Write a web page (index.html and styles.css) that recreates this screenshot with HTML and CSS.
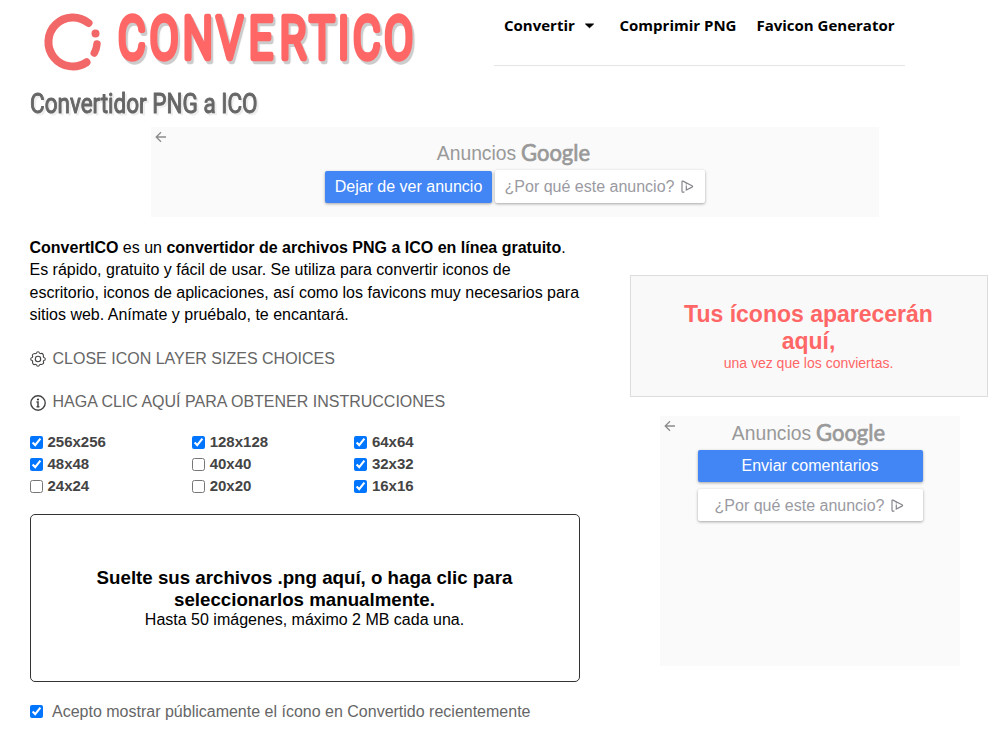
FILE: index.html
```html
<!DOCTYPE html>
<html lang="es">
<head>
<meta charset="utf-8">
<title>Convertidor PNG a ICO</title>
<link rel="stylesheet" href="styles.css">
</head>
<body>
<header class="header">
  <div class="brand">
    <svg class="brand-mark" width="58" height="58" viewBox="0 0 58 58">
      <path d="M44.500 10 A24.500 24.500 0 1 0 42.500 49.300" fill="none" stroke="#f26768" stroke-width="8" stroke-linecap="round"/>
      <circle cx="51.500" cy="20.400" r="4" fill="#f26768"/>
      <path d="M53 31 Q52.500 36 50.300 40" fill="none" stroke="#f26768" stroke-width="7.500" stroke-linecap="round"/>
    </svg>
    <svg class="brand-name" width="320" height="80" viewBox="0 0 320 80">
      <text transform="scale(.72 1)" x="1.7 45.7 91.7 138.4 183.2 226.5 267.3 307 328 371.5" y="58">CONVERTICO</text>
    </svg>
  </div>
  <nav class="nav">
    <a class="nav-drop">Convertir<svg class="caret" width="11" height="6" viewBox="0 0 11 6"><path d="M1.500 1h8L5.500 4.700z"/></svg></a>
    <a>Comprimir PNG</a>
    <a>Favicon Generator</a>
  </nav>
</header>

<h1 class="title">
  <svg width="260" height="41" viewBox="0 0 260 41">
    <text x="1" y="27" textLength="227.500" lengthAdjust="spacingAndGlyphs">Convertidor PNG a ICO</text>
  </svg>
</h1>

<section class="ad ad-wide">
  <svg class="back" width="12" height="12" viewBox="0 0 12 12"><path d="M11 6H1.500M6 1.200L1.200 6L6 10.800"/></svg>
  <div class="ad-head"><span>Anuncios</span><svg class="google" width="70" height="32" viewBox="0 0 70 32"><text x="-1" y="20" textLength="69" lengthAdjust="spacingAndGlyphs">Google</text></svg></div>
  <div class="ad-actions">
    <span class="btn primary">Dejar de ver anuncio</span>
    <span class="btn plain">¿Por qué este anuncio?<svg class="choices" width="13" height="13" viewBox="0 0 13 13"><path d="M3.500 11.700L1.900 12.300Q1 12.200 1 11.300V1.700Q1 .7 2 1.100L11 5.700Q12.200 6.400 11 7.100L5.300 10V5.600"/><path d="M4.700 3.800h1.200"/></svg></span>
  </div>
</section>

<main class="columns">
  <div class="left">
    <p class="intro"><b>ConvertICO</b> es un <b>convertidor de archivos PNG a ICO en línea gratuito</b>. Es rápido, gratuito y fácil de usar. Se utiliza para convertir iconos de escritorio, iconos de aplicaciones, así como los favicons muy necesarios para sitios web. Anímate y pruébalo, te encantará.</p>
    <div class="toggle">
      <svg width="16" height="16" viewBox="0 0 16 16"><path d="M6.500 2.200Q6.700 .7 8 .7T9.500 2.200L10.700 2.700Q12 1.800 12.900 3.100T13.300 5.300L13.800 6.500Q15.300 6.700 15.300 8T13.800 9.500L13.300 10.700Q14.200 12 12.900 12.900T10.700 13.300L9.500 13.800Q9.300 15.300 8 15.300T6.500 13.800L5.300 13.300Q4 14.200 3.100 12.900T2.700 10.700L2.200 9.500Q.7 9.300 .7 8T2.200 6.500L2.700 5.300Q1.800 4 3.100 3.100T5.300 2.700z"/><circle cx="8" cy="8" r="2.700"/></svg>
      <span>CLOSE ICON LAYER SIZES CHOICES</span>
    </div>
    <div class="toggle info">
      <svg width="16" height="16" viewBox="0 0 16 16"><circle cx="8" cy="8" r="7.200" class="ring"/><path class="stem" d="M6.500 6.900H8V11.600M6.600 11.700h2.800"/><circle class="dot" cx="8" cy="4.500" r="1.100"/></svg>
      <span>HAGA CLIC AQUÍ PARA OBTENER INSTRUCCIONES</span>
    </div>
    <div class="sizes">
      <label><input type="checkbox" checked>256x256</label>
      <label><input type="checkbox" checked>128x128</label>
      <label><input type="checkbox" checked>64x64</label>
      <label><input type="checkbox" checked>48x48</label>
      <label><input type="checkbox">40x40</label>
      <label><input type="checkbox" checked>32x32</label>
      <label><input type="checkbox">24x24</label>
      <label><input type="checkbox">20x20</label>
      <label><input type="checkbox" checked>16x16</label>
    </div>
    <div class="drop">
      <strong>Suelte sus archivos .png aquí, o haga clic para seleccionarlos manualmente.</strong>
      <span>Hasta 50 imágenes, máximo 2 MB cada una.</span>
    </div>
    <label class="accept"><input type="checkbox" checked><span>Acepto mostrar públicamente el ícono en Convertido recientemente</span></label>
  </div>
  <aside class="right">
    <div class="result">
      <strong>Tus íconos aparecerán aquí,</strong>
      <span>una vez que los conviertas.</span>
    </div>
    <section class="ad ad-box">
      <svg class="back" width="12" height="12" viewBox="0 0 12 12"><path d="M11 6H1.500M6 1.200L1.200 6L6 10.800"/></svg>
      <div class="ad-head"><span>Anuncios</span><svg class="google" width="70" height="32" viewBox="0 0 70 32"><text x="-1" y="20" textLength="69" lengthAdjust="spacingAndGlyphs">Google</text></svg></div>
      <div class="ad-actions">
        <span class="btn primary">Enviar comentarios</span>
        <span class="btn plain">¿Por qué este anuncio?<svg class="choices" width="13" height="13" viewBox="0 0 13 13"><path d="M3.500 11.700L1.900 12.300Q1 12.200 1 11.300V1.700Q1 .7 2 1.100L11 5.700Q12.200 6.400 11 7.100L5.300 10V5.600"/><path d="M4.700 3.800h1.200"/></svg></span>
      </div>
    </section>
  </aside>
</main>
</body>
</html>
```
FILE: styles.css
```css
* { box-sizing: border-box; }
html, body { height: 732px; overflow: hidden; }
body { margin: 0; background: #fff; color: #000; font: 16px/22.4px "Liberation Sans", Arial, sans-serif; }
svg { display: block; flex: none; overflow: visible; }

.header { display: flex; height: 86px; }
.brand { display: flex; flex: none; width: 494px; padding-left: 43.500px; }
.brand-mark { margin-top: 13px; }
.brand-name { margin-left: 15px; }
.brand-name text { font: 300 58px Roboto, sans-serif; fill: #ff6666; stroke: #ff6666; stroke-width: 5.500px; stroke-linejoin: round; vector-effect: non-scaling-stroke; filter: drop-shadow(3px 3px 0 #ccc); }
.nav { display: flex; gap: 20px; width: 411px; height: 66px; padding: 15px 0 0 10px; border-bottom: 1px solid #e5e5e5; font: 700 15px/21px "Open Sans", sans-serif; white-space: nowrap; }
.nav-drop { display: flex; width: 95.500px; }
.caret { margin: 8px 0 0 9px; fill: #000; stroke: #000; stroke-width: 1; stroke-linejoin: round; }

.title { margin: 0 0 0 29px; height: 41px; }
.title text { font: 400 27px Roboto, sans-serif; fill: #666; stroke: #666; stroke-width: 1px; stroke-linejoin: round; filter: drop-shadow(2px 2px 0 #eee); }

.ad { display: flex; flex-direction: column; align-items: center; background: #fafafa; color: #999; }
.back { align-self: flex-start; margin: 3.500px 0 0 3.500px; fill: none; stroke: #8c8c8c; stroke-width: 1.300; }
.ad-head { display: flex; gap: 6px; height: 26px; margin-left: -1px; font-size: 19.300px; line-height: 22px; }
.google { margin-top: -2px; }
.google text { font: 400 23.500px Lato, sans-serif; fill: #999; stroke: #999; stroke-width: .7px; }
.btn { display: flex; align-items: center; justify-content: center; height: 32px; border-radius: 2px; box-shadow: 0 1px 3px rgba(0,0,0,.35); font-size: 16px; white-space: nowrap; }
.primary { background: #4285f4; color: #fff; }
.plain { background: #fff; color: #9a9aa2; padding: 1px 1px 0 0; }
.choices { margin: -2px 0 0 7px; fill: none; stroke: #85858d; stroke-width: 1.200; }
.ad-wide { width: 728px; height: 90px; margin-left: 151px; }
.ad-wide .ad-actions { display: flex; gap: 3px; align-items: flex-end; margin-top: 1.500px; }
.ad-wide .primary { width: 167px; }
.ad-wide .plain { width: 210px; height: 33px; }

.columns { display: flex; }
.left { width: 550px; margin-left: 30px; padding-top: 20px; }
.intro { margin: 0 -4px 0 -0.500px; }
.toggle { display: flex; gap: 6.500px; margin-top: 21px; color: #666; }
.toggle svg { margin-top: 3px; fill: none; stroke: #444; stroke-width: 1.100; }
.toggle .ring { stroke-width: 1.400; }
.toggle .stem { stroke-width: 1.500; }
.toggle .dot { fill: #333; stroke: none; }
.info svg { margin-top: 4px; }
input { width: 13px; height: 13px; margin: 0; flex: none; }
.sizes { display: grid; grid-template-columns: 162.200px 162.200px 162px; grid-auto-rows: 22px; margin-top: 18px; color: #444; font-size: 15px; font-weight: 700; }
.sizes label { display: flex; align-items: center; gap: 4.500px; line-height: 22px; }
.drop { display: flex; flex-direction: column; justify-content: center; height: 168px; margin-top: 17px; padding: 0 61px 0 60px; border: 1px solid #333; border-radius: 5px; text-align: center; line-height: 18px; }
.drop strong { font-size: 18.720px; line-height: 22px; }
.accept { display: flex; align-items: center; gap: 9px; margin-top: 18px; color: #666; }
.accept input { margin-bottom: 1px; }
.accept span { padding-top: 1px; }

.right { width: 358px; margin-left: 50px; padding-top: 58px; }
.result { display: flex; flex-direction: column; height: 122px; padding: 25px 51px 0 50px; border: 1px solid #ddd; background: #f9f9f9; color: #ff6666; text-align: center; font-size: 14px; line-height: 16px; }
.result strong { font-size: 23px; line-height: 27px; }
.ad-box { width: 300px; height: 250px; margin: 19px 0 0 30px; }
.ad-box .ad-head { margin-top: -9px; }
.ad-box .ad-actions { display: grid; gap: 7px; width: 225px; margin-top: 1.500px; }
.ad-box .plain { padding-top: 2px; }
```
